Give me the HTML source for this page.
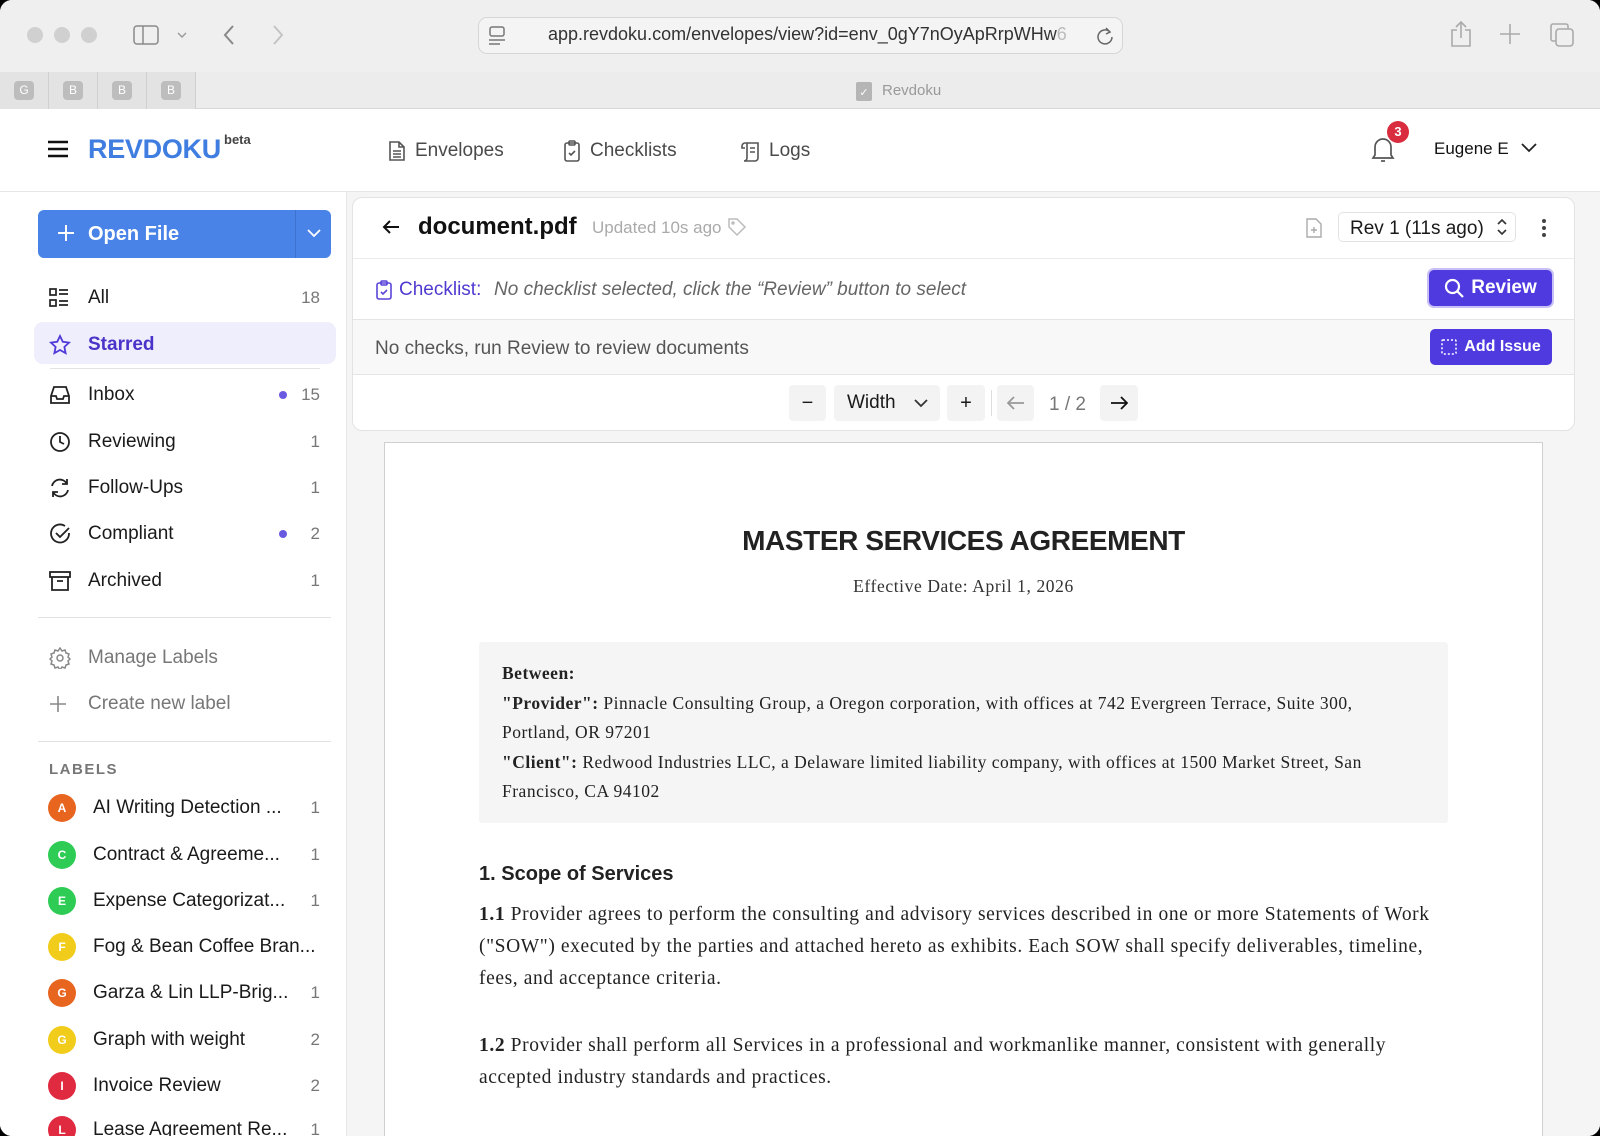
<!DOCTYPE html>
<html><head><meta charset="utf-8"><style>
*{box-sizing:border-box;margin:0;padding:0}
body{width:1600px;height:1136px;overflow:hidden;background:#000;font-family:"Liberation Sans",sans-serif;color:#1a1a1a;position:relative}
.win{position:absolute;inset:0;background:#fff;border-radius:12px;overflow:hidden}
.abs{position:absolute}
.chrome{position:absolute;left:0;top:0;width:1600px;height:72px;background:#efefef}
.tabs{position:absolute;left:0;top:72px;width:1600px;height:37px;background:#ececec;border-bottom:1px solid #d8d8d8}
.dot{position:absolute;top:27px;width:16px;height:16px;border-radius:50%;background:#d0d0d0}
.tab{position:absolute;top:72px;width:49px;height:37px;background:#e3e3e3;border-right:1px solid #d0d0d0}
.tab span{position:absolute;left:14px;top:9px;width:20px;height:19px;border-radius:4px;background:#bdbdbd;color:#fff;font-size:12px;text-align:center;line-height:19px}
.hdr{position:absolute;top:109px;left:0;width:1600px;height:83px;background:#fff;border-bottom:1px solid #e6e6e6}
.nav{position:absolute;top:140px;font-size:19px;color:#4a4a4a;display:flex;align-items:center;gap:9px}
.side{position:absolute;left:0;top:192px;width:347px;height:944px;background:#fff;border-right:1px solid #e6e6e6}
.it{position:absolute;left:0;width:340px;height:30px;font-size:19px;display:flex;align-items:center}
.it svg{position:absolute;left:49px}
.it .t{position:absolute;left:88px}
.it .c{position:absolute;right:20px;color:#777;font-size:17px}
.it .d{position:absolute;right:53px;width:8px;height:8px;border-radius:50%;background:#6a5ae0}
.lb .t{left:93px}
.circ{position:absolute;left:48px;width:28px;height:28px;border-radius:50%;color:#fff;font-size:12px;font-weight:bold;text-align:center;line-height:28px}
.hr{position:absolute;left:38px;width:293px;height:1px;background:#e2e2e2}
.main{position:absolute;left:347px;top:192px;width:1253px;height:944px;background:#f5f5f5}
.card{position:absolute;left:352px;top:197px;width:1223px;height:234px;background:#fff;border:1px solid #e3e3e3;border-radius:10px;overflow:hidden}
.btnP{position:absolute;background:#4f3ae0;color:#fff;border-radius:5px;font-weight:bold;display:flex;align-items:center;justify-content:center;gap:7px}
.tb{position:absolute;top:385px;height:36px;background:#f3f3f3;border-radius:4px;display:flex;align-items:center;justify-content:center;font-size:20px}
.page{position:absolute;left:384px;top:442px;width:1159px;height:700px;background:#fff;border:1px solid #cfcfcf}
.serif{font-family:"Liberation Serif",serif}
</style></head><body><div class="win">
<div class="chrome"></div>
<div class="dot" style="left:27px"></div><div class="dot" style="left:54px"></div><div class="dot" style="left:81px"></div>
<svg class="abs" style="left:133px;top:25px" width="26" height="20" viewBox="0 0 26 20" fill="none" stroke="#8a8a8a" stroke-width="1.5"><rect x="1" y="1" width="24" height="18" rx="3"/><line x1="10" y1="1" x2="10" y2="19"/></svg>
<svg class="abs" style="left:177px;top:31px" width="10" height="8" viewBox="0 0 10 8" fill="none" stroke="#999" stroke-width="1.4"><path d="M1 2l4 4 4-4"/></svg>
<svg class="abs" style="left:223px;top:24px" width="12" height="22" viewBox="0 0 12 22" fill="none" stroke="#888" stroke-width="2"><path d="M10 2L2 11l8 9"/></svg>
<svg class="abs" style="left:272px;top:24px" width="12" height="22" viewBox="0 0 12 22" fill="none" stroke="#c4c4c4" stroke-width="2"><path d="M2 2l8 9-8 9"/></svg>
<div class="abs" style="left:478px;top:17px;width:645px;height:37px;border:1px solid #d6d6d6;border-radius:9px;background:#f4f4f4"></div>
<svg class="abs" style="left:488px;top:26px" width="18" height="20" viewBox="0 0 18 20" fill="none" stroke="#777" stroke-width="1.5"><rect x="2" y="1" width="14" height="9" rx="2"/><line x1="1" y1="14" x2="17" y2="14"/><line x1="1" y1="18" x2="12" y2="18"/></svg>
<div class="abs" style="left:548px;top:24px;font-size:18px;color:#333;white-space:nowrap">app.revdoku.com/envelopes/view?id=env_0gY7nOyApRrpWHw<span style="color:#bbb">6</span></div>
<svg class="abs" style="left:1096px;top:26px" width="18" height="20" viewBox="0 0 18 20" fill="none" stroke="#666" stroke-width="1.5"><path d="M14 6a7 7 0 1 0 2 5"/><path d="M10 2l4 4-4 2"/></svg>
<svg class="abs" style="left:1450px;top:20px" width="22" height="28" viewBox="0 0 22 28" fill="none" stroke="#aaa" stroke-width="1.6"><path d="M7 10H2v16h18V10h-5"/><path d="M11 18V2M6 7l5-5 5 5"/></svg>
<svg class="abs" style="left:1499px;top:23px" width="22" height="22" viewBox="0 0 22 22" fill="none" stroke="#aaa" stroke-width="1.6"><path d="M11 1v20M1 11h20"/></svg>
<svg class="abs" style="left:1549px;top:22px" width="26" height="26" viewBox="0 0 26 26" fill="none" stroke="#aaa" stroke-width="1.6"><rect x="7" y="7" width="17" height="17" rx="3"/><path d="M19 7V4a2 2 0 0 0-2-2H4a2 2 0 0 0-2 2v13a2 2 0 0 0 2 2h3"/></svg>
<div class="tabs"></div>
<div class="tab" style="left:0"><span>G</span></div><div class="tab" style="left:49px"><span>B</span></div><div class="tab" style="left:98px"><span>B</span></div><div class="tab" style="left:147px;width:49px"><span>B</span></div>
<div class="abs" style="left:856px;top:82px;width:16px;height:19px;background:#b5b5b5;border-radius:2px;color:#fff;font-size:11px;text-align:center;line-height:22px">✓</div>
<div class="abs" style="left:882px;top:82px;font-size:15px;color:#999">Revdoku</div>

<div class="hdr"></div>
<svg class="abs" style="left:47px;top:140px" width="22" height="18" viewBox="0 0 22 18" stroke="#111" stroke-width="2.4"><path d="M1 2h20M1 9h20M1 16h20"/></svg>
<div class="abs" style="left:88px;top:134px;font-size:27px;font-weight:bold;color:#3f7ee0;letter-spacing:-0.3px">REVDOKU</div>
<div class="abs" style="left:224px;top:132px;font-size:13px;color:#444;font-weight:bold">beta</div>
<div class="nav" style="left:388px"><svg width="18" height="22" viewBox="0 0 18 22" fill="none" stroke="#555" stroke-width="1.6"><path d="M2 2h9l5 5v13H2z"/><path d="M11 2v5h5M5 11h8M5 14h8M5 17h8"/></svg>Envelopes</div>
<div class="nav" style="left:563px"><svg width="18" height="22" viewBox="0 0 18 22" fill="none" stroke="#555" stroke-width="1.6"><rect x="2" y="3" width="14" height="18" rx="2"/><rect x="6" y="1" width="6" height="4" rx="1"/><path d="M6 13l2 2 4-4"/></svg>Checklists</div>
<div class="nav" style="left:740px"><svg width="20" height="22" viewBox="0 0 20 22" fill="none" stroke="#555" stroke-width="1.6"><path d="M5 3h13v15a3 3 0 0 1-3 3H4a3 3 0 0 0 3-3V3M5 3a3 3 0 0 0-3 3v2h3M10 8h5M10 12h5"/></svg>Logs</div>
<svg class="abs" style="left:1370px;top:134px" width="26" height="30" viewBox="0 0 26 30" fill="none" stroke="#555" stroke-width="1.7"><path d="M5 21V13a8 8 0 0 1 16 0v8l2 3H3z"/><path d="M11 27h4"/></svg>
<div class="abs" style="left:1387px;top:121px;width:22px;height:22px;border-radius:50%;background:#d92d3f;color:#fff;font-size:13px;font-weight:bold;text-align:center;line-height:22px">3</div>
<div class="abs" style="left:1434px;top:139px;font-size:17px;color:#111">Eugene E</div>
<svg class="abs" style="left:1521px;top:143px" width="16" height="10" viewBox="0 0 16 10" fill="none" stroke="#222" stroke-width="1.8"><path d="M1 1l7 7 7-7"/></svg>

<div class="side">
<div class="abs" style="left:38px;top:18px;width:293px;height:48px;background:#4a83e8;border-radius:6px"></div>
<div class="abs" style="left:295px;top:18px;width:1px;height:48px;background:#3e72cf"></div>
<svg class="abs" style="left:57px;top:32px" width="18" height="18" viewBox="0 0 18 18" stroke="#fff" stroke-width="2"><path d="M9 1v16M1 9h16"/></svg>
<div class="abs" style="left:88px;top:31px;font-size:20px;font-weight:bold;color:#fff">Open File</div>
<svg class="abs" style="left:307px;top:37px" width="14" height="9" viewBox="0 0 14 9" fill="none" stroke="#fff" stroke-width="1.8"><path d="M1 1l6 6 6-6"/></svg>
<div class="abs" style="left:34px;top:130px;width:302px;height:42px;background:#eeeefc;border-radius:9px"></div>
<div class="hr" style="top:176px;left:50px;width:270px"></div>
<div class="hr" style="top:425px"></div>
<div class="hr" style="top:549px"></div>
</div>
<div class="it" style="top:283px"><svg width="20" height="20" viewBox="0 0 20 20" fill="none" stroke="#222" stroke-width="1.7"><rect x="1" y="1" width="6" height="6"/><rect x="1" y="12" width="6" height="6"/><path d="M10 2h9M10 6h9M10 13h9M10 17h9"/></svg><span class="t">All</span><span class="c">18</span></div>
<div class="it" style="top:330px"><svg width="22" height="22" viewBox="0 0 22 22" fill="none" stroke="#4f3ad8" stroke-width="1.8"><path d="M11 2l2.8 5.8 6.2.8-4.6 4.3 1.2 6.2L11 16l-5.6 3.1 1.2-6.2L2 8.6l6.2-.8z"/></svg><span class="t" style="color:#4a33c8;font-weight:bold">Starred</span></div>
<div class="it" style="top:380px"><svg width="22" height="20" viewBox="0 0 22 20" fill="none" stroke="#222" stroke-width="1.8"><path d="M2 11l3-9h12l3 9v7H2z"/><path d="M2 11h5l1 3h6l1-3h5"/></svg><span class="t">Inbox</span><span class="d"></span><span class="c">15</span></div>
<div class="it" style="top:427px"><svg width="22" height="22" viewBox="0 0 22 22" fill="none" stroke="#222" stroke-width="1.8"><circle cx="11" cy="11" r="9"/><path d="M11 5v6l4 2"/></svg><span class="t">Reviewing</span><span class="c">1</span></div>
<div class="it" style="top:473px"><svg width="22" height="22" viewBox="0 0 22 22" fill="none" stroke="#222" stroke-width="1.8"><path d="M3 9a8 8 0 0 1 15-2M19 13a8 8 0 0 1-15 2"/><path d="M18 2v5h-5M4 20v-5h5"/></svg><span class="t">Follow-Ups</span><span class="c">1</span></div>
<div class="it" style="top:519px"><svg width="22" height="22" viewBox="0 0 22 22" fill="none" stroke="#222" stroke-width="1.8"><path d="M20 10a9 9 0 1 1-4-7"/><path d="M7 10l4 4 9-9"/></svg><span class="t">Compliant</span><span class="d"></span><span class="c">2</span></div>
<div class="it" style="top:566px"><svg width="22" height="20" viewBox="0 0 22 20" fill="none" stroke="#222" stroke-width="1.8"><rect x="1" y="1" width="20" height="5"/><path d="M3 6v13h16V6M8 10h6"/></svg><span class="t">Archived</span><span class="c">1</span></div>
<div class="it" style="top:643px;color:#777"><svg width="22" height="22" viewBox="0 0 22 22" fill="none" stroke="#888" stroke-width="1.5"><circle cx="11" cy="11" r="3"/><path d="M11 1l2 3 3-1 1 3 3 1-1 3 2 2-2 2 1 3-3 1-1 3-3-1-2 3-2-3-3 1-1-3-3-1 1-3-2-2 2-2-1-3 3-1 1-3 3 1z"/></svg><span class="t">Manage Labels</span></div>
<div class="it" style="top:689px;color:#777"><svg width="18" height="18" viewBox="0 0 18 18" stroke="#888" stroke-width="1.6"><path d="M9 1v16M1 9h16"/></svg><span class="t">Create new label</span></div>
<div class="abs" style="left:49px;top:761px;font-size:15px;font-weight:bold;color:#777;letter-spacing:1.5px">LABELS</div>
<div class="it lb" style="top:793px"><span class="circ" style="background:#e8651f">A</span><span class="t">AI Writing Detection ...</span><span class="c">1</span></div>
<div class="it lb" style="top:840px"><span class="circ" style="background:#2ecc55">C</span><span class="t">Contract &amp; Agreeme...</span><span class="c">1</span></div>
<div class="it lb" style="top:886px"><span class="circ" style="background:#2ecc55">E</span><span class="t">Expense Categorizat...</span><span class="c">1</span></div>
<div class="it lb" style="top:932px"><span class="circ" style="background:#f2cc1a">F</span><span class="t">Fog &amp; Bean Coffee Bran...</span></div>
<div class="it lb" style="top:978px"><span class="circ" style="background:#e8651f">G</span><span class="t">Garza &amp; Lin LLP-Brig...</span><span class="c">1</span></div>
<div class="it lb" style="top:1025px"><span class="circ" style="background:#f2cc1a">G</span><span class="t">Graph with weight</span><span class="c">2</span></div>
<div class="it lb" style="top:1071px"><span class="circ" style="background:#e02a40">I</span><span class="t">Invoice Review</span><span class="c">2</span></div>
<div class="it lb" style="top:1115px"><span class="circ" style="background:#e02a40">L</span><span class="t">Lease Agreement Re...</span><span class="c">1</span></div>

<div class="main"></div>
<div class="card">
<div class="abs" style="left:0;top:60px;width:1223px;height:1px;background:#ececec"></div>
<div class="abs" style="left:0;top:121px;width:1223px;height:56px;background:#f8f8f8;border-top:1px solid #e5e5e5;border-bottom:1px solid #e5e5e5"></div>
</div>
<svg class="abs" style="left:382px;top:219px" width="18" height="16" viewBox="0 0 18 16" fill="none" stroke="#111" stroke-width="2"><path d="M17 8H2M8 2L2 8l6 6"/></svg>
<div class="abs" style="left:418px;top:213px;font-size:24px;font-weight:bold;color:#111">document.pdf</div>
<div class="abs" style="left:592px;top:218px;font-size:17px;color:#aaa">Updated 10s ago</div>
<svg class="abs" style="left:727px;top:217px" width="20" height="20" viewBox="0 0 20 20" fill="none" stroke="#bbb" stroke-width="1.5"><path d="M2 2h8l8 8-8 8-8-8z"/><circle cx="6" cy="6" r="1"/></svg>
<svg class="abs" style="left:1306px;top:218px" width="16" height="20" viewBox="0 0 16 20" fill="none" stroke="#aaa" stroke-width="1.4"><path d="M1 1h9l5 5v13H1z"/><path d="M8 9v6M5 12h6"/></svg>
<div class="abs" style="left:1338px;top:212px;width:178px;height:30px;border:1px solid #e3e3e3;border-radius:5px;font-size:19px;padding:5px 0 0 11px">Rev 1 (11s ago)</div>
<svg class="abs" style="left:1496px;top:218px" width="12" height="18" viewBox="0 0 12 18" fill="none" stroke="#333" stroke-width="1.6"><path d="M2 6l4-4 4 4M2 12l4 4 4-4"/></svg>
<svg class="abs" style="left:1541px;top:218px" width="6" height="20" viewBox="0 0 6 20" fill="#444"><circle cx="3" cy="3" r="2"/><circle cx="3" cy="10" r="2"/><circle cx="3" cy="17" r="2"/></svg>
<svg class="abs" style="left:376px;top:280px" width="16" height="20" viewBox="0 0 16 20" fill="none" stroke="#5a45d8" stroke-width="1.6"><rect x="1" y="3" width="14" height="16" rx="2"/><rect x="5" y="1" width="6" height="4" rx="1"/><path d="M5 12l2 2 4-4"/></svg>
<div class="abs" style="left:399px;top:279px;font-size:19px;color:#4f3ad0">Checklist:</div>
<div class="abs" style="left:494px;top:279px;font-size:19px;color:#666;font-style:italic">No checklist selected, click the “Review” button to select</div>
<div class="btnP" style="left:1429px;top:270px;width:123px;height:36px;font-size:19px;box-shadow:0 0 0 2px #c8c0f4"><svg width="20" height="20" viewBox="0 0 20 20" fill="none" stroke="#fff" stroke-width="2.2"><circle cx="8.5" cy="8.5" r="6.5"/><path d="M13.5 13.5L19 19"/></svg>Review</div>
<div class="abs" style="left:375px;top:338px;font-size:19px;color:#555">No checks, run Review to review documents</div>
<div class="btnP" style="left:1430px;top:329px;width:122px;height:36px;font-size:16px"><svg width="16" height="16" viewBox="0 0 16 16" fill="none" stroke="#fff" stroke-width="1.5" stroke-dasharray="2 2"><rect x="1" y="1" width="14" height="14" rx="1"/></svg>Add Issue</div>
<div class="tb" style="left:789px;width:37px">−</div>
<div class="tb" style="left:834px;width:106px;font-size:19px;justify-content:flex-start;padding-left:13px">Width<svg style="position:absolute;right:12px" width="14" height="9" viewBox="0 0 14 9" fill="none" stroke="#333" stroke-width="1.8"><path d="M1 1l6 6 6-6"/></svg></div>
<div class="tb" style="left:947px;width:38px">+</div>
<div class="abs" style="left:991px;top:390px;width:1px;height:26px;background:#ddd"></div>
<div class="tb" style="left:997px;width:37px;color:#999"><svg width="18" height="14" viewBox="0 0 18 14" fill="none" stroke="#999" stroke-width="1.8"><path d="M17 7H2M7 1L1 7l6 6"/></svg></div>
<div class="abs" style="left:1049px;top:394px;font-size:19px;color:#777">1 / 2</div>
<div class="tb" style="left:1100px;width:38px"><svg width="18" height="14" viewBox="0 0 18 14" fill="none" stroke="#111" stroke-width="1.8"><path d="M1 7h15M11 1l6 6-6 6"/></svg></div>

<div class="page"></div>
<div class="abs" style="left:384px;width:1159px;top:525px;text-align:center;font-size:28px;font-weight:bold;color:#222;letter-spacing:-0.4px">MASTER SERVICES AGREEMENT</div>
<div class="abs serif" style="left:384px;width:1159px;top:576px;text-align:center;font-size:17.5px;color:#333;letter-spacing:0.6px">Effective Date: April 1, 2026</div>
<div class="abs serif" style="left:479px;top:642px;width:969px;height:181px;background:#f5f5f5;border-radius:3px;padding:17px 23px;font-size:17.5px;line-height:29.6px;color:#222;letter-spacing:0.5px">
<b>Between:</b><br><b>"Provider":</b> Pinnacle Consulting Group, a Oregon corporation, with offices at 742 Evergreen Terrace, Suite 300, Portland, OR 97201<br><b>"Client":</b> Redwood Industries LLC, a Delaware limited liability company, with offices at 1500 Market Street, San Francisco, CA 94102</div>
<div class="abs" style="left:479px;top:863px;font-size:20px;font-weight:bold;color:#222">1. Scope of Services</div>
<div class="abs serif" style="left:479px;top:899px;width:960px;font-size:19.5px;line-height:32px;color:#222;letter-spacing:0.6px"><b>1.1</b> Provider agrees to perform the consulting and advisory services described in one or more Statements of Work ("SOW") executed by the parties and attached hereto as exhibits. Each SOW shall specify deliverables, timeline, fees, and acceptance criteria.</div>
<div class="abs serif" style="left:479px;top:1030px;width:960px;font-size:19.5px;line-height:32px;color:#222;letter-spacing:0.6px"><b>1.2</b> Provider shall perform all Services in a professional and workmanlike manner, consistent with generally accepted industry standards and practices.</div>
</div></body></html>
